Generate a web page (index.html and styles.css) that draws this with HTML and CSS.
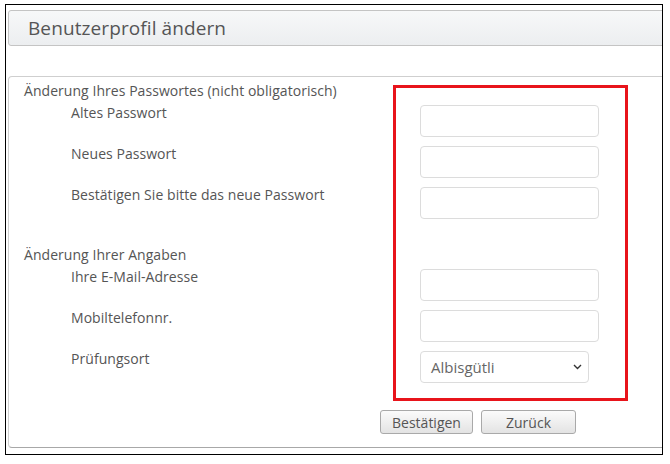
FILE: index.html
```html
<!DOCTYPE html>
<html lang="de">
<head>
<meta charset="utf-8">
<title>Benutzerprofil ändern</title>
<link rel="stylesheet" href="styles.css">
</head>
<body>
<div class="frame">
  <div class="header"><h1 class="title">Benutzerprofil ändern</h1></div>
  <form class="panel">
    <div class="section-title">Änderung Ihres Passwortes (nicht obligatorisch)</div>
    <div class="row"><label class="label">Altes Passwort</label><input class="field" type="password"></div>
    <div class="row"><label class="label">Neues Passwort</label><input class="field" type="password"></div>
    <div class="row"><label class="label">Bestätigen Sie bitte das neue Passwort</label><input class="field" type="password"></div>
    <div class="section-title second">Änderung Ihrer Angaben</div>
    <div class="row"><label class="label">Ihre E-Mail-Adresse</label><input class="field" type="text"></div>
    <div class="row"><label class="label">Mobiltelefonnr.</label><input class="field" type="text"></div>
    <div class="row"><label class="label">Prüfungsort</label>
      <div class="select"><span class="select-value">Albisgütli</span>
        <svg class="chevron" width="9" height="6" viewBox="0 0 9 6"><path d="M1 1 L4.5 4.5 L8 1" fill="none" stroke="#333" stroke-width="1.4"/></svg>
      </div>
    </div>
    <div class="actions">
      <button type="button" class="btn btn-confirm">Bestätigen</button>
      <button type="button" class="btn btn-back">Zurück</button>
    </div>
    <div class="highlight"></div>
  </form>
</div>
</body>
</html>
```
FILE: styles.css
```css
* { box-sizing: border-box; }
html, body { margin: 0; padding: 0; background: #fff; }
body {
  font-family: "Open Sans", "Noto Sans", sans-serif;
  color: #555;
  width: 670px;
  height: 464px;
  padding: 4px 0 0 5px;
}
.frame {
  position: relative;
  width: 658px;
  height: 451px;
  border: 1px solid #000;
  overflow: hidden;
  padding: 5px 0 0 2px;
}
.header {
  width: 670px;
  height: 36px;
  border: 1px solid #c4c4c4;
  border-radius: 3px;
  background: linear-gradient(#f7f8f9, #eceef0);
  padding: 0 0 0 19px;
  display: flex;
  align-items: center;
}
.title {
  margin: 0;
  font-size: 19px;
  font-weight: 400;
  color: #555;
  letter-spacing: 0.1px;
}
.panel {
  position: relative;
  margin-top: 30px;
  width: 670px;
  height: 372px;
  border: 1px solid #cfcfcf;
  border-bottom-color: #a8a8a8;
  border-radius: 4px;
  padding: 4px 0 0 15px;
}
.section-title {
  font-size: 14px;
  line-height: 20px;
  height: 20px;
  margin-bottom: 2px;
  letter-spacing: 0.05px;
  white-space: nowrap;
}
.section-title.second { margin-top: 19px; }
.row {
  display: flex;
  align-items: flex-start;
  height: 41px;
}
.label {
  width: 396px;
  padding-left: 47px;
  font-size: 14px;
  line-height: 20px;
  letter-spacing: 0.05px;
  white-space: nowrap;
}
.field {
  margin-top: 2px;
  width: 179px;
  height: 32px;
  border: 1px solid #dcdcdc;
  border-radius: 4px;
  background: #fff;
  outline: none;
}
.select {
  margin-top: 2px;
  width: 169px;
  height: 32px;
  border: 1px solid #dcdcdc;
  border-radius: 4px;
  background: #fff;
  display: flex;
  align-items: center;
  justify-content: space-between;
  padding: 0 6px 0 10px;
}
.select-value {
  font-size: 15px;
  color: #666;
}
.chevron { display: block; }
.actions {
  display: flex;
  gap: 8px;
  margin-top: 20px;
  padding-left: 356px;
}
.btn {
  height: 24px;
  padding: 0;
  font-family: inherit;
  font-size: 14px;
  color: #555;
  border: 1px solid #a9a9a9;
  border-radius: 3px;
  background: linear-gradient(#fbfbfb, #e3e3e3);
}
.btn-confirm { width: 93px; }
.btn-back { width: 95px; }
.highlight {
  position: absolute;
  left: 384px;
  top: 8px;
  width: 235px;
  height: 316px;
  border: 3px solid #e8141b;
  pointer-events: none;
}
```
